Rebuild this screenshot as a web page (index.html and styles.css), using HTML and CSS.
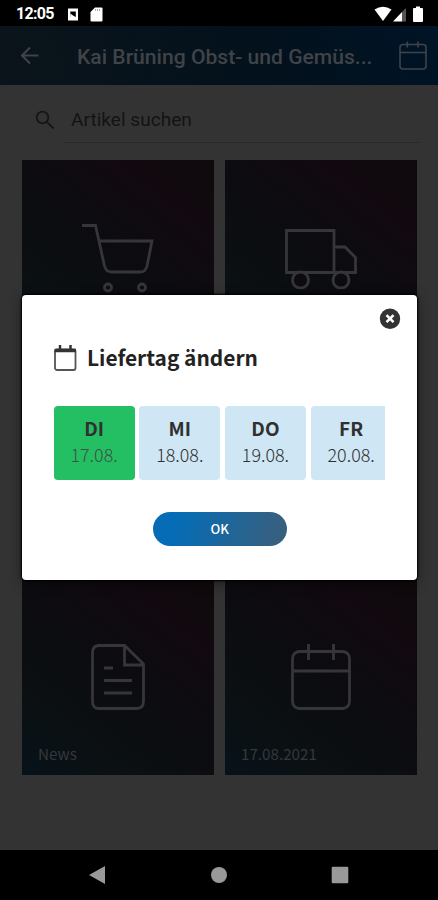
FILE: index.html
```html
<!DOCTYPE html>
<html lang="de">
<head>
<meta charset="utf-8">
<title>Liefertag ändern</title>
<link rel="stylesheet" href="styles.css">
</head>
<body>
<div class="phone">
  <div class="status">
    <span class="time">12:05</span>
    <svg class="status-app" width="12" height="13" viewBox="0 0 12 13"><path fill="#fff" fill-rule="evenodd" d="M1 .5h10v12H1zM3.300 3.500v5.500h5.500V3.500z"/><path fill="#fff" d="M3.300 9V5.500L6 7.500 8.800 9z"/></svg>
    <svg class="status-card" width="13" height="15" viewBox="0 0 13 15"><path fill="#fff" d="M5 .5h6.500q1 0 1 1v12q0 1-1 1h-10q-1 0-1-1V5z"/><path stroke="#aaa" d="M5.500 2v2M7.500 2v2M9.500 2v2"/></svg>
    <svg class="status-net" width="52" height="17" viewBox="0 0 52 17"><path fill="#fff" d="M.5 3.500Q9-2 17.500 3.500L9 15z"/><path fill="#fff" d="M19 15.500L28 6v9.500z"/><path fill="#555" d="M28 6l4-4v13.500h-4z"/><path fill="#fff" d="M42 .5h4v1.500h2q1 0 1 1v12q0 1-1 1h-8q-1 0-1-1v-12q0-1 1-1h2z"/></svg>
  </div>
  <header class="bar">
    <svg width="20" height="20" viewBox="0 0 20 20" class="line"><path stroke-width="2" d="M18.500 9.500H2M10 1.500l-8 8 8 8"/></svg>
    <h1>Kai Brüning Obst- und Gemüs...</h1>
    <svg width="28" height="30" viewBox="0 0 28 30" class="line"><rect x="1" y="3.500" width="26" height="24.500" rx="3" stroke-width="1.600"/><path stroke-width="1.600" d="M1 11.500h26M8.300 .5v6M19 .5v6"/></svg>
  </header>
  <main class="content">
    <div class="search">
      <svg width="20" height="20" viewBox="0 0 20 20"><g fill="none" stroke="#151515" stroke-width="1.800"><circle cx="7.500" cy="6.500" r="5.800"/><path d="M12 11l6.500 6.500"/></g></svg>
      <span class="field">Artikel suchen</span>
    </div>
    <div class="grid">
      <div class="tile"><svg width="72" height="70" viewBox="0 0 72 70" class="icon"><path d="M0 1.500h13.500L22.500 42q1.500 6 7 6h29q5 0 6.500-6L70 17H17"/><circle cx="26" cy="63.500" r="3.500"/><circle cx="60" cy="63.500" r="3.500"/></svg></div>
      <div class="tile"><svg width="72" height="60" viewBox="0 0 72 60" class="icon"><path d="M1.500 1.500h47.500v42H1.500zM49 18h11l10.500 10.500v15H49"/><circle class="wheel" cx="15.500" cy="51" r="8"/><circle class="wheel" cx="56" cy="51" r="8"/></svg></div>
      <div class="tile"></div>
      <div class="tile"></div>
      <div class="tile low"><svg width="54" height="66" viewBox="0 0 54 66" class="icon"><path d="M8 1.500h25.500L52.500 20v37q0 7.500-7 7.500H8q-6.500 0-6.500-7V9q0-7.500 6.500-7.500zM33.500 1.500V21h19M13 24h9M13 36.500h28M13 49h28"/></svg><span class="label">News</span></div>
      <div class="tile low"><svg width="60" height="66" viewBox="0 0 60 66" class="icon"><rect x="1.500" y="7.500" width="57" height="57" rx="7"/><path d="M1.500 27h57M17.500 0v16M42.500 0v16"/></svg><span class="label">17.08.2021</span></div>
    </div>
  </main>
  <nav class="nav">
    <svg width="18" height="20" viewBox="0 0 18 20"><path fill="#999" d="M1 10L17 1v18z"/></svg>
    <svg width="18" height="18" viewBox="0 0 18 18"><circle cx="9" cy="9" r="8" fill="#999"/></svg>
    <svg width="18" height="18" viewBox="0 0 18 18"><rect x=".7" y=".7" width="16.600" height="16.600" rx="1" fill="#999"/></svg>
  </nav>
  <section class="dialog">
    <svg class="close" width="22" height="22" viewBox="0 0 22 22"><circle cx="11" cy="10.700" r="10.200" fill="#333"/><path d="M7.500 7.200l7 7M14.500 7.200l-7 7" stroke="#fff" stroke-width="2.600"/></svg>
    <div class="heading">
      <svg width="24" height="27" viewBox="0 0 24 27"><rect x="1" y="4.500" width="20.500" height="20.500" rx="2" fill="none" stroke="#555" stroke-width="1.800"/><path d="M.5 5.500h21.500" stroke="#333" stroke-width="3.500"/><path d="M6 0v5M16.500 0v5" stroke="#333" stroke-width="2.500"/></svg>
      <h2>Liefertag ändern</h2>
    </div>
    <div class="days">
      <div class="day active"><b>DI</b><span>17.08.</span></div>
      <div class="day"><b>MI</b><span>18.08.</span></div>
      <div class="day"><b>DO</b><span>19.08.</span></div>
      <div class="day"><b>FR</b><span>20.08.</span></div>
    </div>
    <button class="ok">OK</button>
  </section>
</div>
</body>
</html>
```
FILE: styles.css
```css
* { box-sizing: border-box; }
body { margin: 0; background: #000; }
svg { display: block; flex: none; }
h1, h2 { margin: 0; white-space: nowrap; }
.phone { position: relative; width: 438px; height: 900px; display: flex; flex-direction: column; overflow: hidden; background: #333; font-family: Roboto, sans-serif; }
.status { height: 26px; background: #000; display: flex; align-items: center; padding: 2px 14px 0 16px; color: #fff; }
.time { width: 51px; font-size: 16px; font-weight: 700; letter-spacing: -.7px; line-height: 24px; }
.status-card { margin-left: 11px; }
.status-net { margin-left: auto; margin-right: -2px; }
.bar { height: 59px; display: flex; align-items: center; padding: 0 11px 0 20px; background: linear-gradient(70deg, #0b141a, #02111d 65%, #001427); }
.bar h1 { width: 322px; margin-left: 37px; font-size: 21.1px; font-weight: 500; color: #404347; line-height: 30px; padding-top: 2px; }
.bar svg:last-child { margin-left: auto; }
.line { fill: none; stroke: #404347; }
.content { flex: 1; padding: 13px 22px 0; }
.search { display: flex; align-items: center; height: 45px; padding-left: 13px; }
.search svg { margin-right: 9px; }
.field { flex: 1; height: 45px; padding-left: 7px; margin-right: -4px; border-bottom: 1px solid #292929; font-size: 19.1px; line-height: 44px; color: #131313; }
.grid { margin-top: 17px; display: grid; grid-template-columns: 192px 192px; grid-template-rows: repeat(3, 197.500px); gap: 11px; }
.tile { position: relative; display: flex; align-items: center; justify-content: center; background: linear-gradient(38deg, #07121a, #0b1012 24%, #0c0c10 52%, #11090f 78%, #0f090c); }
.low { padding-top: 2px; }
.icon { fill: none; stroke: #36363a; stroke-width: 2.800; }
.wheel { fill: #0c0c10; }
.label { position: absolute; left: 16px; bottom: 11px; font: 15.2px/22px "Noto Sans CJK SC", sans-serif; color: #35383b; }
.nav { height: 50px; background: #000; display: flex; align-items: center; justify-content: space-between; padding: 0 89px 0 88px; }
.dialog { position: absolute; left: 22px; top: 295px; width: 395px; height: 285px; padding: 49px 32px 0 31.500px; background: #fff; border-radius: 4px; box-shadow: 0 0 2px 1px #000, 0 3px 14px rgba(0,0,0,.45); font-family: "Noto Sans CJK SC", sans-serif; }
.close { position: absolute; right: 16px; top: 13px; }
.heading { display: flex; align-items: center; height: 28px; gap: 9.500px; }
h2 { font-size: 20.9px; line-height: 28px; font-weight: 700; color: #222; padding-bottom: 2px; }
.days { display: flex; gap: 4.500px; width: 331.500px; margin-top: 33.500px; overflow: hidden; }
.day { flex: 0 0 81.200px; height: 74.500px; border-radius: 4px; background: #cfe6f4; display: flex; flex-direction: column; align-items: center; padding-top: 8.500px; color: #303030; }
.day b { font-size: 19px; line-height: 27px; }
.day span { font-size: 17.9px; line-height: 26px; font-weight: 300; }
.active { background: #25bf63; }
.active span { color: #3d5145; }
.ok { display: block; margin: 31.500px auto 0; width: 134px; height: 34px; border: 0; padding: 0; border-radius: 17px; position: relative; left: .5px; background: linear-gradient(105deg, #056cb5 20%, #366080 90%); color: #fff; font: 500 13px/34px "Noto Sans CJK SC", sans-serif; }
```
